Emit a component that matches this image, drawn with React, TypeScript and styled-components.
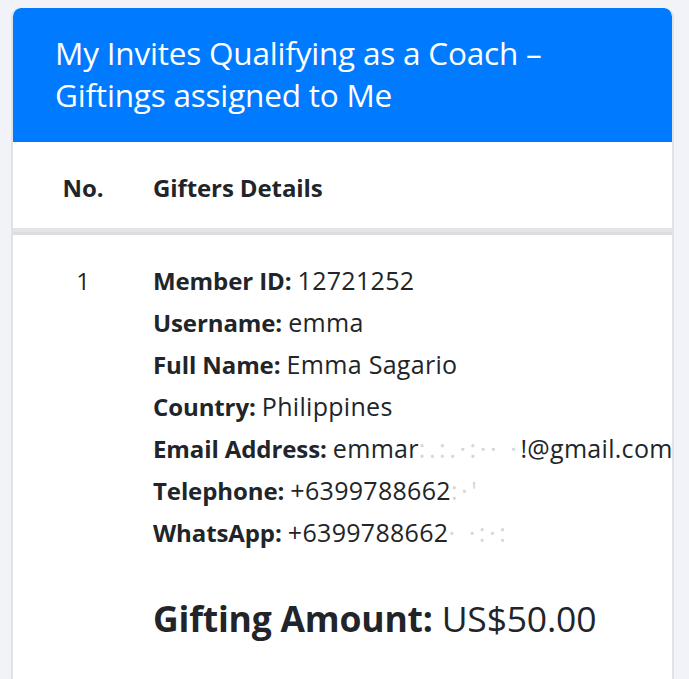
import * as React from 'react';
import styled, { createGlobalStyle } from 'styled-components';

const GlobalStyle = createGlobalStyle`
  html, body {
    margin: 0;
    padding: 0;
    background: #f2f3f8;
  }
  body {
    font-family: 'Open Sans', 'Noto Sans', 'Liberation Sans', sans-serif;
    color: #212529;
  }
`;

const Page = styled.div`
  padding: 8px 15px 0 11px;
  height: 679px;
  overflow: hidden;
  box-sizing: border-box;
`;

const Card = styled.div`
  background: #ffffff;
  border: 2px solid #e1e2e7;
  border-top: none;
  border-radius: 9px 9px 0 0;
  overflow: hidden;
  min-height: 700px;
`;

const CardHeader = styled.div`
  background: #007bff;
  color: #ffffff;
  padding: 24px 30px 26px 42px;
  font-size: 31.5px;
  line-height: 42px;
  font-weight: 400;
  letter-spacing: -0.2px;
  border-radius: 8px 8px 0 0;
`;

const Row = styled.div<{ $head?: boolean }>`
  display: grid;
  grid-template-columns: 140px 1fr;
  align-items: start;
  padding: ${(p) => (p.$head ? '32px 0 26px' : '25px 0 40px')};
  border-bottom: ${(p) => (p.$head ? '4px solid #e4e5e7' : 'none')};
  border-top: ${(p) => (p.$head ? 'none' : '3px solid #dcdde0')};
`;

const HeadCell = styled.div<{ $center?: boolean }>`
  font-size: 24px;
  font-weight: 700;
  line-height: 28px;
  letter-spacing: -0.1px;
  text-align: ${(p) => (p.$center ? 'center' : 'left')};
`;

const NumCell = styled.div`
  font-size: 24px;
  line-height: 42px;
  text-align: center;
  font-weight: 400;
`;

const Details = styled.div`
  font-size: 24px;
  line-height: 42px;
  white-space: nowrap;
  letter-spacing: -0.1px;
`;

const Line = styled.div`
  height: 42px;
`;

const Label = styled.span`
  font-weight: 700;
`;

const Value = styled.span`
  font-size: 25px;
  line-height: 1;
  letter-spacing: 0.3px;
`;

const Hidden = styled.span`
  color: #d4d6da;
  letter-spacing: 3.6px;
`;

const Amount = styled.div`
  margin-top: 40px;
  font-size: 35.5px;
  line-height: 48px;
  letter-spacing: -0.2px;
`;

const rows = [
  { label: 'Member ID:', value: '12721252' },
  { label: 'Username:', value: 'emma' },
  { label: 'Full Name:', value: 'Emma Sagario' },
  { label: 'Country:', value: 'Philippines' },
];

export default function App() {
  return (
    <>
      <GlobalStyle />
      <Page>
        <Card>
          <CardHeader>
            My Invites Qualifying as a Coach –<br />
            Giftings assigned to Me
          </CardHeader>
          <Row $head>
            <HeadCell $center>No.</HeadCell>
            <HeadCell>Gifters Details</HeadCell>
          </Row>
          <Row>
            <NumCell>1</NumCell>
            <Details>
              {rows.map((r) => (
                <Line key={r.label}>
                  <Label>{r.label}</Label> <Value>{r.value}</Value>
                </Line>
              ))}
              <Line>
                <Label>Email Address:</Label>{' '}
                <Value>
                  emmar<Hidden>:.:.·:·· ·</Hidden>!@gmail.com
                </Value>
              </Line>
              <Line>
                <Label>Telephone:</Label>{' '}
                <Value>
                  +6399788662<Hidden>:·'</Hidden>
                </Value>
              </Line>
              <Line>
                <Label>WhatsApp:</Label>{' '}
                <Value>
                  +6399788662<Hidden>· ·:·:</Hidden>
                </Value>
              </Line>
              <Amount>
                <Label>Gifting Amount:</Label> US$50.00
              </Amount>
            </Details>
          </Row>
        </Card>
      </Page>
    </>
  );
}
